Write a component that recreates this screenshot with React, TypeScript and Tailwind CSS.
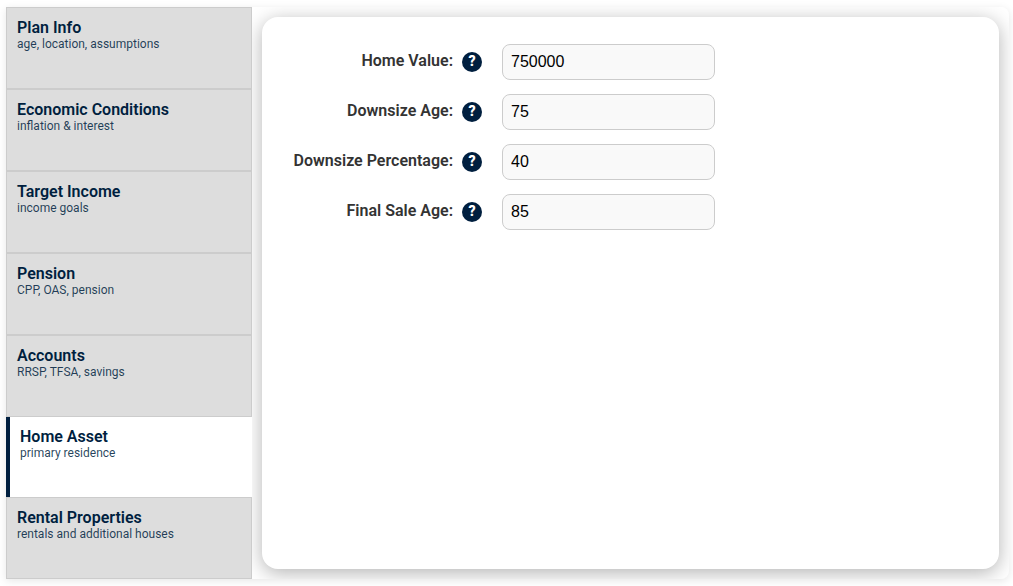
import { useState } from "react";

const TABS = [
  { id: "plan", title: "Plan Info", detail: "age, location, assumptions" },
  { id: "economy", title: "Economic Conditions", detail: "inflation & interest" },
  { id: "income", title: "Target Income", detail: "income goals" },
  { id: "pension", title: "Pension", detail: "CPP, OAS, pension" },
  { id: "accounts", title: "Accounts", detail: "RRSP, TFSA, savings" },
  { id: "home", title: "Home Asset", detail: "primary residence" },
  { id: "rental", title: "Rental Properties", detail: "rentals and additional houses" },
];

const FIELDS = [
  { id: "home-value", label: "Home Value:", value: "750000" },
  { id: "downsize-age", label: "Downsize Age:", value: "75" },
  { id: "downsize-percentage", label: "Downsize Percentage:", value: "40" },
  { id: "final-sale-age", label: "Final Sale Age:", value: "85" },
];

function TabButton({
  title,
  detail,
  active,
  onClick,
}: {
  title: string;
  detail: string;
  active: boolean;
  onClick: () => void;
}) {
  return (
    <button
      onClick={onClick}
      className={`flex w-full cursor-pointer flex-col items-start px-2.5 py-2.5 text-left text-[#001f3f] ${
        active
          ? "h-20 border-l-4 border-[#001f3f] bg-white"
          : "h-[82px] border border-[#ccc] bg-[#ddd]"
      }`}
    >
      <span className="text-base leading-[19px] font-semibold">{title}</span>
      <span className="text-xs leading-[14px] text-[#001f3f]/85">{detail}</span>
    </button>
  );
}

function FieldRow({ id, label, value }: { id: string; label: string; value: string }) {
  return (
    <div className="flex items-center">
      <label htmlFor={id} className="w-[171px] pb-0.5 text-right font-semibold text-[#333]">
        {label}
      </label>
      <button
        type="button"
        aria-label={`Help for ${label}`}
        className="ml-[9px] flex size-5 shrink-0 items-center justify-center rounded-full bg-[#001f3f] pb-0.5 text-sm leading-5 font-black text-white"
      >
        ?
      </button>
      <input
        id={id}
        type="text"
        defaultValue={value}
        className="ml-5 h-9 w-[213px] rounded-lg border border-[#ccc] bg-[#f9f9f9] px-2 font-['Liberation_Sans',sans-serif] text-base text-black"
      />
    </div>
  );
}

export default function App() {
  const [activeTab, setActiveTab] = useState("home");

  return (
    <div className="min-h-screen bg-white pt-[7px] pr-1 pb-[7px] pl-1.5 font-['Roboto',sans-serif]">
      <div className="flex overflow-hidden rounded-r-lg shadow-[0_2px_8px_rgba(0,0,0,0.1)]">
        {/* Plan sections */}
        <nav className="relative z-10 w-[246px] shrink-0">
          {TABS.map((tab) => (
            <TabButton
              key={tab.id}
              title={tab.title}
              detail={tab.detail}
              active={tab.id === activeTab}
              onClick={() => setActiveTab(tab.id)}
            />
          ))}
        </nav>

        {/* Form */}
        <main className="m-2.5 flex-1 rounded-2xl bg-white px-5 py-[27px] shadow-[0_4px_20px_rgba(0,0,0,0.3)]">
          <form className="flex flex-col gap-3.5" onSubmit={(e) => e.preventDefault()}>
            {FIELDS.map((field) => (
              <FieldRow key={field.id} id={field.id} label={field.label} value={field.value} />
            ))}
          </form>
        </main>
      </div>
    </div>
  );
}
